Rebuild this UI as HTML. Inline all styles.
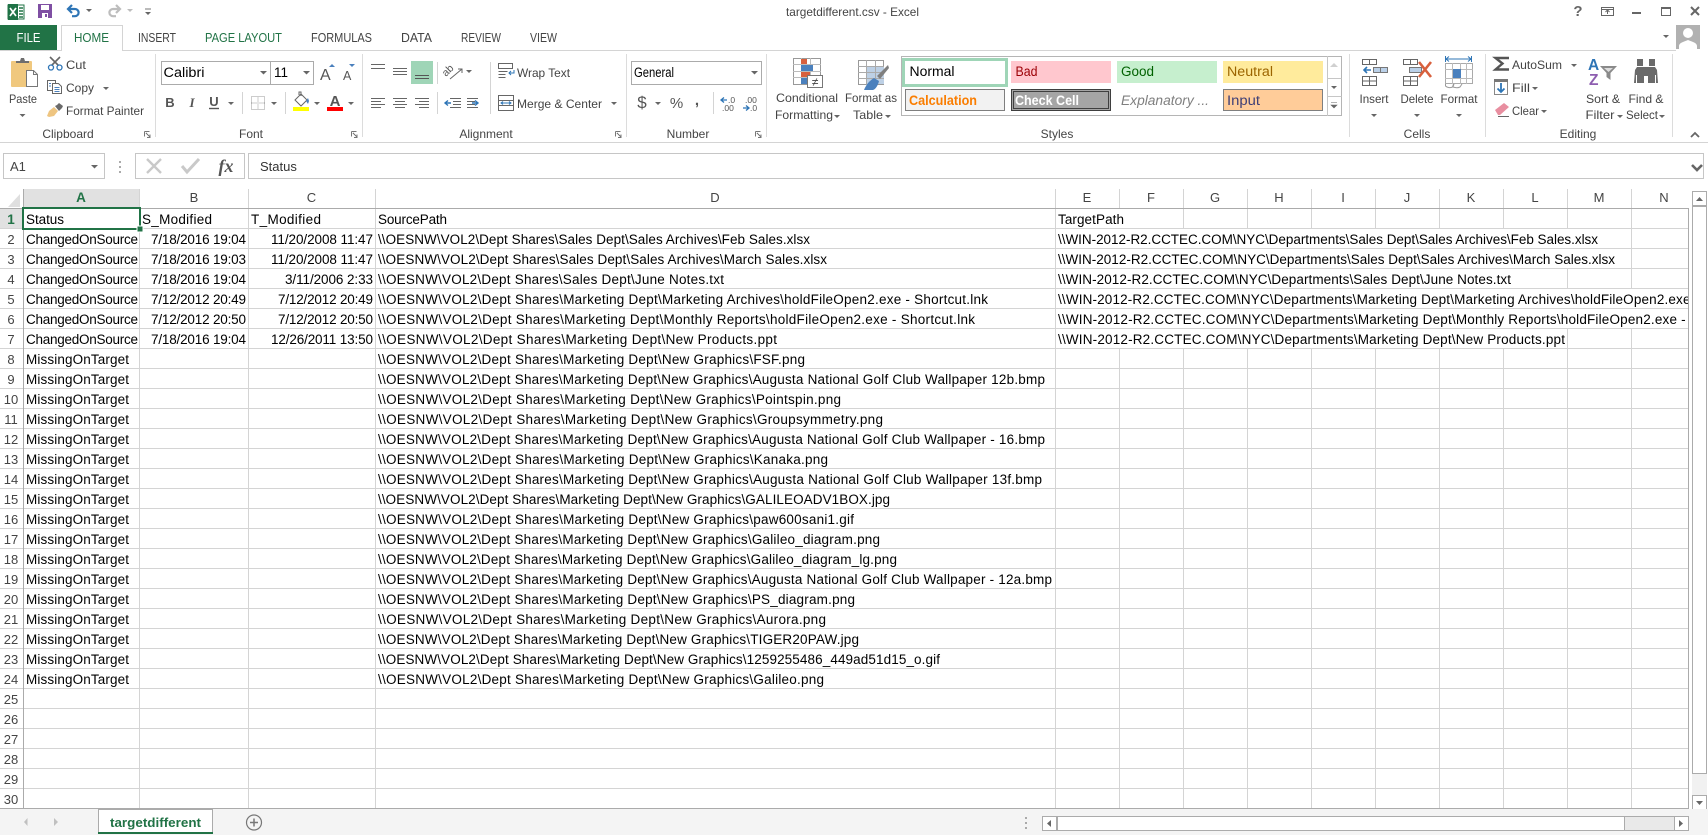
<!DOCTYPE html>
<html><head><meta charset="utf-8"><title>targetdifferent.csv - Excel</title>
<style>
html,body{margin:0;padding:0;background:#fff;width:1708px;height:835px;overflow:hidden}
svg{display:block}
text{font-family:"Liberation Sans",sans-serif;white-space:pre}
.r{font-size:12px;fill:#444}
.m{text-anchor:middle}
.c{font-size:13.5px;fill:#000}
.e{text-anchor:end}
.h{font-size:13px;fill:#444;text-anchor:middle}
.n{font-size:13px;fill:#444;text-anchor:middle}
.t{font-size:12px;fill:#444}
.s{font-size:13.5px}
.k{fill:#666}
.l{shape-rendering:crispEdges}
</style></head><body>
<svg width="1708" height="835" viewBox="0 0 1708 835" xmlns="http://www.w3.org/2000/svg">
<defs>
<clipPath id="ca"><rect x="23" y="208" width="116" height="600"/></clipPath>
<clipPath id="ce"><rect x="1056" y="208" width="632" height="600"/></clipPath>
</defs>
<rect width="1708" height="835" fill="#fff"/>

<!-- title bar -->
<rect x="8" y="5" width="16" height="14" fill="#fff" stroke="#217346" stroke-width="1"/>
<path d="M19 8h4M19 11h4M19 14h4M19 17h4" stroke="#217346" stroke-width="1.4"/>
<rect x="8" y="4" width="10" height="16" fill="#1f7246"/>
<path d="M10 8l6 8M16 8l-6 8" stroke="#fff" stroke-width="1.7"/>
<rect x="38" y="4" width="14" height="14" fill="#7f4fa3"/>
<rect x="41" y="5" width="8" height="5" fill="#fff"/><rect x="42" y="13" width="6" height="5" fill="#fff"/><rect x="45" y="14" width="2" height="3" fill="#7f4fa3"/>
<path d="M72 5l-4 4 4 4M68 9h7a3.6 3.6 0 0 1 0 7.2h-3" fill="none" stroke="#2e75b6" stroke-width="2.2"/>
<path d="M86 9h6l-3 3z" class="k"/>
<path d="M116 5l4 4-4 4M120 9h-7a3.6 3.6 0 0 0 0 7.2h3" fill="none" stroke="#bdbdbd" stroke-width="2.2"/>
<path d="M127 9h6l-3 3z" fill="#bdbdbd"/>
<path d="M145 9h6" stroke="#777" stroke-width="1"/><path d="M145 12h6l-3 3z" class="k"/>
<text x="852.5" y="16" class="r m" textLength="133" lengthAdjust="spacingAndGlyphs">targetdifferent.csv - Excel</text>
<text x="1578" y="16" font-size="15" font-weight="bold" fill="#666" text-anchor="middle">?</text>
<rect x="1601.5" y="7.5" width="12" height="8" fill="none" stroke="#666"/><path d="M1601 9.5h13" stroke="#666"/><path d="M1607.5 14v-3.5M1605.5 12l2-2 2 2" fill="none" stroke="#666"/>
<rect x="1632" y="12" width="9" height="2" fill="#666"/>
<rect x="1661.5" y="7.5" width="9" height="8" fill="none" stroke="#666"/><path d="M1661 8h10" stroke="#666" stroke-width="2"/>
<path d="M1691 7l8 8M1699 7l-8 8" stroke="#666" stroke-width="2"/>
<path d="M1663 35h6l-3 3z" class="k"/>
<rect x="1676" y="25" width="24" height="24" fill="#b1b1b1"/>
<circle cx="1688" cy="33" r="5" fill="#fff"/><path d="M1679 49v-3c0-3 4-4 9-6 5 2 9 3 9 6v3z" fill="#fff"/>

<!-- tabs -->
<rect x="0" y="25" width="57" height="25" fill="#217346"/>
<text x="28.5" y="42" font-size="12.5" fill="#fff" text-anchor="middle" textLength="24" lengthAdjust="spacingAndGlyphs">FILE</text>
<path d="M0 50.5H61.5V25.5H122.5V50.5H1676" fill="none" stroke="#d4d4d4" class="l"/>
<rect x="62" y="26" width="60" height="25" fill="#fff"/>
<text x="74" y="42" font-size="12.5" fill="#217346" textLength="35" lengthAdjust="spacingAndGlyphs">HOME</text>
<text x="138" y="42" font-size="12.5" fill="#444" textLength="38" lengthAdjust="spacingAndGlyphs">INSERT</text>
<text x="205" y="42" font-size="12.5" fill="#217346" textLength="77" lengthAdjust="spacingAndGlyphs">PAGE LAYOUT</text>
<text x="311" y="42" font-size="12.5" fill="#444" textLength="61" lengthAdjust="spacingAndGlyphs">FORMULAS</text>
<text x="401" y="42" font-size="12.5" fill="#444" textLength="31" lengthAdjust="spacingAndGlyphs">DATA</text>
<text x="461" y="42" font-size="12.5" fill="#444" textLength="40" lengthAdjust="spacingAndGlyphs">REVIEW</text>
<text x="530" y="42" font-size="12.5" fill="#444" textLength="27" lengthAdjust="spacingAndGlyphs">VIEW</text>

<!-- group separators -->
<path d="M155.5 54v83M362.5 54v83M626.5 54v83M766.5 54v83M1349.5 54v83M1485.5 54v83M1672.5 54v83" stroke="#dcdcdc" class="l"/>
<path d="M0 142.5H1708" stroke="#d4d4d4" class="l"/>

<!-- clipboard -->
<rect x="11" y="61" width="21" height="26" rx="1" fill="#f0c87e"/>
<path d="M16 63v-2h4l1-3h3l1 3h4v2z" fill="#6e6e6e"/>
<path d="M26.5 70.5h7l4 4v12h-11z" fill="#fff" stroke="#777"/><path d="M33.5 70.5v4h4" fill="none" stroke="#777"/>
<text x="23" y="103" class="r m" textLength="28" lengthAdjust="spacingAndGlyphs">Paste</text>
<path d="M19.500 114h6l-3 3z" class="k"/>
<path d="M50 57l8.500 8.500M60 57l-8.500 8.500" stroke="#666" stroke-width="1.6"/>
<circle cx="51" cy="67.500" r="2.500" fill="none" stroke="#2e75b6" stroke-width="1.300"/><circle cx="59.500" cy="67.500" r="2.500" fill="none" stroke="#2e75b6" stroke-width="1.300"/>
<text x="66" y="69" class="r" textLength="20" lengthAdjust="spacingAndGlyphs">Cut</text>
<rect x="47.500" y="80.500" width="8" height="10" fill="#fff" stroke="#666"/>
<path d="M52.500 83.500h6l3 3v7h-9z" fill="#fff" stroke="#666"/><path d="M54.500 87.500h5M54.500 89.500h5M54.500 91.500h5M49 83.500h2M49 86h2" stroke="#4a80bd"/>
<text x="66" y="92" class="r" textLength="28" lengthAdjust="spacingAndGlyphs">Copy</text>
<path d="M103 87h6l-3 3z" class="k"/>
<path d="M47 116l2-5 5-4 4 4-4 5-5 1z" fill="#eec581"/><path d="M55 106l2-1 2-2 4 3-1 2-2 2-1 1z" fill="#6a6a6a"/>
<text x="66" y="115" class="r" textLength="78" lengthAdjust="spacingAndGlyphs">Format Painter</text>
<text x="68" y="138" class="t m" fill="#555">Clipboard</text>
<path d="M144.500 131.500h5M144.500 131.500v5M146 133l4 4M150 134.500v3h-3" fill="none" stroke="#777" class="l"/>

<!-- font -->
<rect x="161.500" y="61.500" width="109" height="23" fill="#fff" stroke="#ababab"/><rect x="270.500" y="61.500" width="43" height="23" fill="#fff" stroke="#ababab"/>
<text x="163.500" y="77" class="s" fill="#000" textLength="41" lengthAdjust="spacingAndGlyphs">Calibri</text>
<path d="M260 71h7l-3.500 3.500z" class="k"/>
<text x="274" y="77" class="s" fill="#000">11</text>
<path d="M303 71h7l-3.500 3.500z" class="k"/>
<text x="320" y="80" font-size="16" fill="#555">A</text><path d="M329 67h6l-3-3z" fill="#4a80bd"/>
<text x="343" y="80" font-size="12.500" fill="#555">A</text><path d="M349 64h6l-3 3z" fill="#4a80bd"/>
<text x="170" y="107" font-size="13" font-weight="bold" fill="#555" text-anchor="middle">B</text>
<text x="192" y="107" font-size="13" font-style="italic" style="font-family:'Liberation Serif',serif" fill="#555" font-weight="bold" text-anchor="middle">I</text>
<text x="214" y="106" font-size="13" font-weight="bold" fill="#555" text-anchor="middle">U</text><path d="M209 108.500h10" stroke="#555" stroke-width="1.400"/>
<path d="M228 102h6l-3 3z" class="k"/>
<path d="M242.500 92v22M285.500 92v22" stroke="#d4d4d4" class="l"/>
<path d="M251.500 96.500h13v13h-13zM258 96.500v13M251.500 103h13" fill="none" stroke="#999" stroke-dasharray="1 1" class="l"/>
<path d="M271 102h6l-3 3z" class="k"/>
<path d="M295 100l6-6 6 6-6 6z" fill="#fff" stroke="#666"/><path d="M308 98l1 3-1 3-2-3z" fill="#4a80bd"/><path d="M299 95v-3h2v4" fill="none" stroke="#666"/>
<rect x="293" y="107" width="16" height="4" fill="#ff0"/>
<path d="M314 102h6l-3 3z" class="k"/>
<text x="335" y="106" font-size="15" font-weight="bold" fill="#555" text-anchor="middle">A</text>
<rect x="327" y="107" width="16" height="4" fill="#f00"/>
<path d="M348 102h6l-3 3z" class="k"/>
<text x="251" y="138" class="t m" fill="#555">Font</text>
<path d="M351.500 131.500h5M351.500 131.500v5M353 133l4 4M357 134.500v3h-3" fill="none" stroke="#777" class="l"/>

<!-- alignment -->
<path d="M371 64.500h14M371 68.500h14M393 68.500h14M393 71.500h14M393 74.500h14" stroke="#666" class="l"/>
<rect x="411" y="61" width="22" height="23" fill="#9fd5b7"/>
<path d="M415 75.500h14M415 78.500h14" stroke="#555" class="l"/>
<path d="M437.500 62v22M437.500 92v22M490.500 62v52" stroke="#d4d4d4" class="l"/>
<text x="0" y="0" font-size="10.500" fill="#555" transform="translate(446 77) rotate(-45)">ab</text>
<path d="M450 79l12-10M462 73v-4h-4" fill="none" stroke="#666"/>
<path d="M466 70h6l-3 3z" class="k"/>
<path d="M371 98.500h14M371 101.500h10M371 104.500h14M371 107.500h10M393 98.500h14M395 101.500h10M393 104.500h14M395 107.500h10M415 98.500h14M419 101.500h10M415 104.500h14M419 107.500h10" stroke="#666" class="l"/>
<path d="M450 98.500h11M453 101.500h8M453 104.500h8M450 107.500h11M467 98.500h11M467 101.500h8M467 104.500h8M467 107.500h11" stroke="#666" class="l"/>
<path d="M451 103h-6M448 100.500l-3 2.500 3 2.500M472 103h6M475 100.500l3 2.500-3 2.500" fill="none" stroke="#2e75b6" stroke-width="1.400"/>
<path d="M498.500 63.500h14v5h-14zM498.500 71.500h9M498.500 74.500h7M498.500 77.500h7" fill="none" stroke="#666"/><path d="M514 70v3h-5M511 71l-2 2 2 2" fill="none" stroke="#2e75b6"/>
<text x="517" y="77" class="r" textLength="53" lengthAdjust="spacingAndGlyphs">Wrap Text</text>
<rect x="498.500" y="95.500" width="15" height="15" fill="#fff" stroke="#666"/><path d="M498.500 100.500h15M498.500 105.500h15" stroke="#666"/><path d="M501 103h10M503 101.500l-2 1.500 2 1.500M509 101.500l2 1.500-2 1.500" fill="none" stroke="#2e75b6"/>
<text x="517" y="108" class="r" textLength="85" lengthAdjust="spacingAndGlyphs">Merge &amp; Center</text>
<path d="M611 102h6l-3 3z" class="k"/>
<text x="486" y="138" class="t m" fill="#555">Alignment</text>
<path d="M615.500 131.500h5M615.500 131.500v5M617 133l4 4M621 134.500v3h-3" fill="none" stroke="#777" class="l"/>

<!-- number -->
<rect x="631.500" y="61.500" width="130" height="23" fill="#fff" stroke="#ababab"/>
<text x="634" y="77" class="s" fill="#000" textLength="40" lengthAdjust="spacingAndGlyphs">General</text>
<path d="M751 71h7l-3.500 3.500z" class="k"/>
<text x="642" y="108" font-size="17" fill="#555" text-anchor="middle">$</text>
<path d="M655 102h6l-3 3z" class="k"/>
<text x="676.500" y="108" font-size="15" fill="#555" text-anchor="middle">%</text>
<text x="697" y="105" font-size="15" font-weight="bold" fill="#555" text-anchor="middle">,</text>
<path d="M713.500 92v22" stroke="#d4d4d4" class="l"/>
<path d="M727 100h-6M724 97.500l-3 2.500 3 2.500" fill="none" stroke="#2e75b6" stroke-width="1.300"/>
<text x="728" y="103" font-size="8.500" fill="#555">.0</text><text x="722" y="111" font-size="8.500" fill="#555">.00</text>
<text x="745" y="103" font-size="8.500" fill="#555">.00</text><text x="750" y="111" font-size="8.500" fill="#555">.0</text>
<path d="M743 108h6M746 105.500l3 2.500-3 2.500" fill="none" stroke="#2e75b6" stroke-width="1.300"/>
<text x="688" y="138" class="t m" fill="#555">Number</text>
<path d="M755.500 131.500h5M755.500 131.500v5M757 133l4 4M761 134.500v3h-3" fill="none" stroke="#777" class="l"/>

<!-- conditional / table -->
<rect x="793.500" y="58.500" width="27" height="26" fill="#fff" stroke="#999"/>
<path d="M801.500 58v26M810.500 58v26M793 64.500h28M793 71.500h28M793 77.500h28" stroke="#bbb" class="l"/>
<rect x="801" y="59" width="6" height="5" fill="#d8603d"/><rect x="801" y="65" width="12" height="6" fill="#4a80bd"/><rect x="801" y="72" width="9" height="5" fill="#d8603d"/><rect x="801" y="78" width="6" height="6" fill="#4a80bd"/>
<rect x="807.500" y="75.500" width="15" height="12" fill="#fff" stroke="#777"/>
<text x="815" y="86" font-size="12" fill="#444" text-anchor="middle">≠</text>
<text x="807" y="102" class="r m" textLength="62" lengthAdjust="spacingAndGlyphs">Conditional</text>
<text x="804" y="119" class="r m" textLength="58" lengthAdjust="spacingAndGlyphs">Formatting</text>
<path d="M834 115h6l-3 3z" class="k"/>
<rect x="858.500" y="60.500" width="25" height="24" fill="#fff" stroke="#999"/>
<rect x="866" y="66" width="18" height="18" fill="#bdd0e5"/>
<path d="M866.500 60v25M875.500 60v25M858 66.500h26M858 72.500h26M858 78.500h26" stroke="#aaa" class="l"/>
<path d="M888 65l1 3-9 11-3-3z" fill="#7f7f7f"/><path d="M864 90c2-5 5-9 10-12l5 3c-1 4-3 8-6 9z" fill="#4a80bd"/>
<text x="871" y="102" class="r m" textLength="52" lengthAdjust="spacingAndGlyphs">Format as</text>
<text x="868" y="119" class="r m" textLength="30" lengthAdjust="spacingAndGlyphs">Table</text>
<path d="M885 115h6l-3 3z" class="k"/>

<!-- styles gallery -->
<rect x="901.500" y="56.500" width="440" height="59" fill="#fff" stroke="#b5b5b5"/>
<path d="M1327.500 56v60M1327.500 78.500h14M1327.500 96.500h14" stroke="#c6c6c6" class="l"/>
<path d="M1330 67l4-4 4 4z" fill="#d0d0d0"/><path d="M1331 86h6l-3 3z" class="k"/><path d="M1331 102.500h6M1331 105h6l-3 3z" class="k" stroke="#666" stroke-width=".6"/>
<rect x="903.500" y="59.500" width="103" height="26" fill="#fff" stroke="#9fd5b7" stroke-width="3"/>
<text x="909.500" y="76" font-size="13.500" fill="#000" textLength="45" lengthAdjust="spacingAndGlyphs">Normal</text>
<rect x="1011" y="61" width="100" height="22" fill="#ffc7ce"/>
<text x="1015.500" y="76" font-size="13.500" fill="#9c0006" textLength="22" lengthAdjust="spacingAndGlyphs">Bad</text>
<rect x="1117" y="61" width="100" height="22" fill="#c6efce"/>
<text x="1121" y="76" font-size="13.500" fill="#006100" textLength="33" lengthAdjust="spacingAndGlyphs">Good</text>
<rect x="1223" y="61" width="100" height="22" fill="#ffeb9c"/>
<text x="1227" y="76" font-size="13.500" fill="#9c6500" textLength="46" lengthAdjust="spacingAndGlyphs">Neutral</text>
<rect x="905.500" y="89.500" width="99" height="21" fill="#f2f2f2" stroke="#7f7f7f"/>
<text x="909" y="105" font-size="13.500" font-weight="bold" fill="#fa7d00" textLength="68" lengthAdjust="spacingAndGlyphs">Calculation</text>
<rect x="1011.500" y="89.500" width="99" height="21" fill="#a5a5a5" stroke="#3f3f3f"/>
<rect x="1013.500" y="91.500" width="95" height="17" fill="none" stroke="#3f3f3f"/>
<text x="1015" y="105" font-size="13.500" font-weight="bold" fill="#fff" textLength="64" lengthAdjust="spacingAndGlyphs">Check Cell</text>
<text x="1121" y="105" font-size="13.500" font-style="italic" fill="#7f7f7f" textLength="88" lengthAdjust="spacingAndGlyphs">Explanatory ...</text>
<rect x="1223.500" y="89.500" width="99" height="21" fill="#fc9" stroke="#7f7f7f"/>
<text x="1227" y="105" font-size="13.500" fill="#3f3f76" textLength="33" lengthAdjust="spacingAndGlyphs">Input</text>
<text x="1057" y="138" class="t m" fill="#555">Styles</text>

<!-- cells -->
<path d="M1362.500 59.500h14v5h-14zM1369.500 59v6M1362.500 76.500h14v9h-14zM1369.500 76v10M1362 81h15" fill="none" stroke="#666"/>
<rect x="1373.500" y="67.500" width="14" height="5" fill="#bad0e8" stroke="#777"/><path d="M1380.500 67v6" stroke="#777"/>
<path d="M1371 70h-7M1367 67l-3 3 3 3" fill="none" stroke="#2e75b6" stroke-width="1.600"/>
<text x="1374" y="103" class="r m" textLength="29" lengthAdjust="spacingAndGlyphs">Insert</text><path d="M1371 114h6l-3 3z" class="k"/>
<path d="M1403.500 59.500h14v5h-14zM1410.500 59v6M1403.500 76.500h14v9h-14zM1410.500 76v10M1403 81h15" fill="none" stroke="#666"/>
<rect x="1409.500" y="67.500" width="12" height="5" fill="#bad0e8" stroke="#777"/>
<path d="M1419 62l12 15M1431 62l-12 15" stroke="#d8603d" stroke-width="2.600"/>
<text x="1417" y="103" class="r m" textLength="33" lengthAdjust="spacingAndGlyphs">Delete</text><path d="M1414 114h6l-3 3z" class="k"/>
<path d="M1446 59h25M1449 56.500l-3 2.500 3 2.500M1468 56.500l3 2.500-3 2.500M1445.500 56v6M1471.500 56v6" fill="none" stroke="#2e75b6"/>
<rect x="1445.500" y="63.500" width="27" height="20" fill="#fff" stroke="#aaa"/>
<path d="M1452.500 63v21M1460.500 63v21M1466.500 63v21M1445 69.500h28M1445 78.500h28" stroke="#bbb" class="l"/>
<rect x="1453" y="69" width="8" height="9" fill="#4a80bd"/>
<path d="M1445.500 84v2c2 2 5 2 7 1l1-3M1454 84l-1 3c3 1 5 1 7 0l2-3" fill="none" stroke="#999"/>
<text x="1459" y="103" class="r m" textLength="37" lengthAdjust="spacingAndGlyphs">Format</text><path d="M1456 114h6l-3 3z" class="k"/>
<text x="1417" y="138" class="t m" fill="#555">Cells</text>

<!-- editing -->
<path d="M1509 58H1495.500L1502.500 63.500L1495.500 69.500H1509" fill="none" stroke="#555" stroke-width="2.400"/>
<text x="1512" y="69" class="r" textLength="50" lengthAdjust="spacingAndGlyphs">AutoSum</text>
<path d="M1571 64h6l-3 3z" class="k"/>
<rect x="1494.500" y="79.500" width="13" height="15" fill="#fff" stroke="#888"/><rect x="1494" y="79" width="14" height="3" fill="#777"/>
<path d="M1501 83v9M1497.500 88.500l3.500 3.500 3.500-3.500" fill="none" stroke="#2e75b6" stroke-width="1.800"/>
<text x="1512" y="92" class="r" textLength="18" lengthAdjust="spacingAndGlyphs">Fill</text>
<path d="M1532 87h6l-3 3z" class="k"/>
<path d="M1495 110l9-7 5 4-9 8h-2z" fill="#e88ea0"/><path d="M1498 116.500h11" stroke="#666" class="l"/>
<text x="1512" y="115" class="r" textLength="27" lengthAdjust="spacingAndGlyphs">Clear</text>
<path d="M1541 110h6l-3 3z" class="k"/>
<text x="1588" y="70" font-size="15.500" font-weight="bold" fill="#2e75b6">A</text>
<text x="1589" y="85" font-size="15.500" font-weight="bold" fill="#8e5eb0">Z</text>
<path d="M1600 66h17l-6.500 7v7l-4-3v-4z" fill="#8a8a8a"/><path d="M1604 68h9l-4.500 4z" fill="#ddd"/>
<text x="1603" y="103" class="r m" textLength="34" lengthAdjust="spacingAndGlyphs">Sort &amp;</text>
<text x="1600" y="119" class="r m" textLength="29" lengthAdjust="spacingAndGlyphs">Filter</text>
<path d="M1617 115h6l-3 3z" class="k"/>
<rect x="1637" y="59" width="6" height="7" fill="#6a6a6a"/><rect x="1649" y="59" width="6" height="7" fill="#6a6a6a"/>
<path d="M1634 83l1-13 2-3h7v16zM1658 83l-1-13-2-3h-7v16z" fill="#6a6a6a"/>
<rect x="1644" y="67" width="4" height="9" fill="#6a6a6a"/>
<path d="M1636.500 75v8M1655.500 75v8" stroke="#fff" class="l"/>
<text x="1646" y="103" class="r m" textLength="35" lengthAdjust="spacingAndGlyphs">Find &amp;</text>
<text x="1642" y="119" class="r m" textLength="32" lengthAdjust="spacingAndGlyphs">Select</text>
<path d="M1659 115h6l-3 3z" class="k"/>
<text x="1578" y="138" class="t m" fill="#555">Editing</text>
<path d="M1691 137l4-4 4 4" fill="none" stroke="#666" stroke-width="1.800"/>

<!-- formula bar -->
<rect x="3.500" y="153.500" width="101" height="25" fill="#fff" stroke="#c6c6c6"/>
<text x="10" y="171" font-size="13" fill="#444">A1</text>
<path d="M91 165h7l-3.500 3.500z" class="k"/>
<path d="M119 161h2v2h-2zM119 166h2v2h-2zM119 171h2v2h-2z" fill="#aaa"/>
<rect x="135.500" y="153.500" width="109" height="25" fill="#fff" stroke="#c6c6c6"/>
<path d="M147 159l14 14M161 159l-14 14" stroke="#c9c9c9" stroke-width="2.400"/>
<path d="M182 166l5 6 12-13" fill="none" stroke="#c9c9c9" stroke-width="3"/>
<text x="226" y="172" font-size="18" font-style="italic" style="font-family:'Liberation Serif',serif" fill="#555" font-weight="bold" text-anchor="middle">fx</text>
<rect x="248.500" y="153.500" width="1455" height="25" fill="#fff" stroke="#c6c6c6"/>
<text x="260" y="171" font-size="13" fill="#333">Status</text>
<path d="M1692 165l5 5 5-5" fill="none" stroke="#666" stroke-width="2.600"/>

<!-- grid headers -->
<rect x="23" y="189" width="116" height="19" fill="#e1e1e1"/>
<rect x="0" y="209" width="23" height="19" fill="#e1e1e1"/>
<path d="M20 194v13H8z" fill="#dfdfdf"/>
<!-- grid lines -->
<path d="M23 228.500h1665M23 248.500h1665M23 268.500h1665M23 288.500h1665M23 308.500h1665M23 328.500h1665M23 348.500h1665M23 368.500h1665M23 388.500h1665M23 408.500h1665M23 428.500h1665M23 448.500h1665M23 468.500h1665M23 488.500h1665M23 508.500h1665M23 528.500h1665M23 548.500h1665M23 568.500h1665M23 588.500h1665M23 608.500h1665M23 628.500h1665M23 648.500h1665M23 668.500h1665M23 688.500h1665M23 708.500h1665M23 728.500h1665M23 748.500h1665M23 768.500h1665M23 788.500h1665M0 228.500h23M0 248.500h23M0 268.500h23M0 288.500h23M0 308.500h23M0 328.500h23M0 348.500h23M0 368.500h23M0 388.500h23M0 408.500h23M0 428.500h23M0 448.500h23M0 468.500h23M0 488.500h23M0 508.500h23M0 528.500h23M0 548.500h23M0 568.500h23M0 588.500h23M0 608.500h23M0 628.500h23M0 648.500h23M0 668.500h23M0 688.500h23M0 708.500h23M0 728.500h23M0 748.500h23M0 768.500h23M0 788.500h23" stroke="#d4d4d4" class="l"/>
<path d="M139.500 189V808M248.500 189V808M375.500 189V808M1055.500 189V808M1119.500 189V808M1183.500 189V808M1247.500 189V808M1311.500 189V808M1375.500 189V808M1439.500 189V808M1503.500 189V808M1567.500 189V808M1631.500 189V808" stroke="#d4d4d4" class="l"/>
<!-- overflowed text hides vertical gridlines -->
<rect x="1117" y="209" width="4" height="19" fill="#fff"/>
<rect x="1057" y="229" width="573" height="19" fill="#fff"/>
<rect x="1057" y="249" width="573" height="19" fill="#fff"/>
<rect x="1057" y="269" width="509" height="19" fill="#fff"/>
<rect x="1057" y="289" width="631" height="19" fill="#fff"/>
<rect x="1057" y="309" width="631" height="19" fill="#fff"/>
<rect x="1057" y="329" width="509" height="19" fill="#fff"/>
<path d="M0 208.500H1688M23.500 189V808M1688.500 208V808M0 808.500H1689" stroke="#ababab" class="l"/>

<text x="81" y="202" font-size="13.500" font-weight="bold" fill="#217346" text-anchor="middle">A</text>
<text x="194" y="202" class="h">B</text><text x="311.500" y="202" class="h">C</text><text x="715" y="202" class="h">D</text><text x="1087" y="202" class="h">E</text><text x="1151" y="202" class="h">F</text><text x="1215" y="202" class="h">G</text><text x="1279" y="202" class="h">H</text><text x="1343" y="202" class="h">I</text><text x="1407" y="202" class="h">J</text><text x="1471" y="202" class="h">K</text><text x="1535" y="202" class="h">L</text><text x="1599" y="202" class="h">M</text><text x="1664" y="202" class="h">N</text>

<text x="11" y="224" font-size="13.500" font-weight="bold" fill="#217346" text-anchor="middle">1</text>
<text x="11" y="244" class="n">2</text><text x="11" y="264" class="n">3</text><text x="11" y="284" class="n">4</text><text x="11" y="304" class="n">5</text><text x="11" y="324" class="n">6</text><text x="11" y="344" class="n">7</text><text x="11" y="364" class="n">8</text><text x="11" y="384" class="n">9</text><text x="11" y="404" class="n">10</text><text x="11" y="424" class="n">11</text><text x="11" y="444" class="n">12</text><text x="11" y="464" class="n">13</text><text x="11" y="484" class="n">14</text><text x="11" y="504" class="n">15</text><text x="11" y="524" class="n">16</text><text x="11" y="544" class="n">17</text><text x="11" y="564" class="n">18</text><text x="11" y="584" class="n">19</text><text x="11" y="604" class="n">20</text><text x="11" y="624" class="n">21</text><text x="11" y="644" class="n">22</text><text x="11" y="664" class="n">23</text><text x="11" y="684" class="n">24</text><text x="11" y="704" class="n">25</text><text x="11" y="724" class="n">26</text><text x="11" y="744" class="n">27</text><text x="11" y="764" class="n">28</text><text x="11" y="784" class="n">29</text><text x="11" y="804" class="n">30</text>

<!-- cells -->
<g>
<g clip-path="url(#ca)">
<text class="c" x="26" y="224" textLength="38">Status</text>
<text class="c" x="26" y="244" textLength="112">ChangedOnSource</text>
<text class="c" x="26" y="264" textLength="112">ChangedOnSource</text>
<text class="c" x="26" y="284" textLength="112">ChangedOnSource</text>
<text class="c" x="26" y="304" textLength="112">ChangedOnSource</text>
<text class="c" x="26" y="324" textLength="112">ChangedOnSource</text>
<text class="c" x="26" y="344" textLength="112">ChangedOnSource</text>
<text class="c" x="26" y="364" textLength="103">MissingOnTarget</text>
<text class="c" x="26" y="384" textLength="103">MissingOnTarget</text>
<text class="c" x="26" y="404" textLength="103">MissingOnTarget</text>
<text class="c" x="26" y="424" textLength="103">MissingOnTarget</text>
<text class="c" x="26" y="444" textLength="103">MissingOnTarget</text>
<text class="c" x="26" y="464" textLength="103">MissingOnTarget</text>
<text class="c" x="26" y="484" textLength="103">MissingOnTarget</text>
<text class="c" x="26" y="504" textLength="103">MissingOnTarget</text>
<text class="c" x="26" y="524" textLength="103">MissingOnTarget</text>
<text class="c" x="26" y="544" textLength="103">MissingOnTarget</text>
<text class="c" x="26" y="564" textLength="103">MissingOnTarget</text>
<text class="c" x="26" y="584" textLength="103">MissingOnTarget</text>
<text class="c" x="26" y="604" textLength="103">MissingOnTarget</text>
<text class="c" x="26" y="624" textLength="103">MissingOnTarget</text>
<text class="c" x="26" y="644" textLength="103">MissingOnTarget</text>
<text class="c" x="26" y="664" textLength="103">MissingOnTarget</text>
<text class="c" x="26" y="684" textLength="103">MissingOnTarget</text>
</g>
<text class="c" x="142" y="224" textLength="70">S_Modified</text>
<text class="c" x="251" y="224" textLength="70">T_Modified</text>
<text class="c" x="378" y="224" textLength="69">SourcePath</text>
<text class="c" x="151" y="244" textLength="95">7/18/2016 19:04</text><text class="c" x="271" y="244" textLength="102">11/20/2008 11:47</text>
<text class="c" x="151" y="264" textLength="95">7/18/2016 19:03</text><text class="c" x="271" y="264" textLength="102">11/20/2008 11:47</text>
<text class="c" x="151" y="284" textLength="95">7/18/2016 19:04</text><text class="c" x="285" y="284" textLength="88">3/11/2006 2:33</text>
<text class="c" x="151" y="304" textLength="95">7/12/2012 20:49</text><text class="c" x="278" y="304" textLength="95">7/12/2012 20:49</text>
<text class="c" x="151" y="324" textLength="95">7/12/2012 20:50</text><text class="c" x="278" y="324" textLength="95">7/12/2012 20:50</text>
<text class="c" x="151" y="344" textLength="95">7/18/2016 19:04</text><text class="c" x="271" y="344" textLength="102">12/26/2011 13:50</text>
<text class="c" x="378" y="244" textLength="432">\\OESNW\VOL2\Dept Shares\Sales Dept\Sales Archives\Feb Sales.xlsx</text>
<text class="c" x="378" y="264" textLength="449">\\OESNW\VOL2\Dept Shares\Sales Dept\Sales Archives\March Sales.xlsx</text>
<text class="c" x="378" y="284" textLength="346">\\OESNW\VOL2\Dept Shares\Sales Dept\June Notes.txt</text>
<text class="c" x="378" y="304" textLength="610">\\OESNW\VOL2\Dept Shares\Marketing Dept\Marketing Archives\holdFileOpen2.exe - Shortcut.lnk</text>
<text class="c" x="378" y="324" textLength="597">\\OESNW\VOL2\Dept Shares\Marketing Dept\Monthly Reports\holdFileOpen2.exe - Shortcut.lnk</text>
<text class="c" x="378" y="344" textLength="399">\\OESNW\VOL2\Dept Shares\Marketing Dept\New Products.ppt</text>
<text class="c" x="378" y="364" textLength="427">\\OESNW\VOL2\Dept Shares\Marketing Dept\New Graphics\FSF.png</text>
<text class="c" x="378" y="384" textLength="667">\\OESNW\VOL2\Dept Shares\Marketing Dept\New Graphics\Augusta National Golf Club Wallpaper 12b.bmp</text>
<text class="c" x="378" y="404" textLength="463">\\OESNW\VOL2\Dept Shares\Marketing Dept\New Graphics\Pointspin.png</text>
<text class="c" x="378" y="424" textLength="505">\\OESNW\VOL2\Dept Shares\Marketing Dept\New Graphics\Groupsymmetry.png</text>
<text class="c" x="378" y="444" textLength="667">\\OESNW\VOL2\Dept Shares\Marketing Dept\New Graphics\Augusta National Golf Club Wallpaper - 16.bmp</text>
<text class="c" x="378" y="464" textLength="450">\\OESNW\VOL2\Dept Shares\Marketing Dept\New Graphics\Kanaka.png</text>
<text class="c" x="378" y="484" textLength="664">\\OESNW\VOL2\Dept Shares\Marketing Dept\New Graphics\Augusta National Golf Club Wallpaper 13f.bmp</text>
<text class="c" x="378" y="504" textLength="512">\\OESNW\VOL2\Dept Shares\Marketing Dept\New Graphics\GALILEOADV1BOX.jpg</text>
<text class="c" x="378" y="524" textLength="476">\\OESNW\VOL2\Dept Shares\Marketing Dept\New Graphics\paw600sani1.gif</text>
<text class="c" x="378" y="544" textLength="502">\\OESNW\VOL2\Dept Shares\Marketing Dept\New Graphics\Galileo_diagram.png</text>
<text class="c" x="378" y="564" textLength="519">\\OESNW\VOL2\Dept Shares\Marketing Dept\New Graphics\Galileo_diagram_lg.png</text>
<text class="c" x="378" y="584" textLength="674">\\OESNW\VOL2\Dept Shares\Marketing Dept\New Graphics\Augusta National Golf Club Wallpaper - 12a.bmp</text>
<text class="c" x="378" y="604" textLength="477">\\OESNW\VOL2\Dept Shares\Marketing Dept\New Graphics\PS_diagram.png</text>
<text class="c" x="378" y="624" textLength="448">\\OESNW\VOL2\Dept Shares\Marketing Dept\New Graphics\Aurora.png</text>
<text class="c" x="378" y="644" textLength="481">\\OESNW\VOL2\Dept Shares\Marketing Dept\New Graphics\TIGER20PAW.jpg</text>
<text class="c" x="378" y="664" textLength="562">\\OESNW\VOL2\Dept Shares\Marketing Dept\New Graphics\1259255486_449ad51d15_o.gif</text>
<text class="c" x="378" y="684" textLength="446">\\OESNW\VOL2\Dept Shares\Marketing Dept\New Graphics\Galileo.png</text>
<g clip-path="url(#ce)">
<text class="c" x="1058" y="224" textLength="66">TargetPath</text>
<text class="c" x="1058" y="244" textLength="540">\\WIN-2012-R2.CCTEC.COM\NYC\Departments\Sales Dept\Sales Archives\Feb Sales.xlsx</text>
<text class="c" x="1058" y="264" textLength="557">\\WIN-2012-R2.CCTEC.COM\NYC\Departments\Sales Dept\Sales Archives\March Sales.xlsx</text>
<text class="c" x="1058" y="284" textLength="453">\\WIN-2012-R2.CCTEC.COM\NYC\Departments\Sales Dept\June Notes.txt</text>
<text class="c" x="1058" y="304" textLength="718">\\WIN-2012-R2.CCTEC.COM\NYC\Departments\Marketing Dept\Marketing Archives\holdFileOpen2.exe - Shortcut.lnk</text>
<text class="c" x="1058" y="324" textLength="705">\\WIN-2012-R2.CCTEC.COM\NYC\Departments\Marketing Dept\Monthly Reports\holdFileOpen2.exe - Shortcut.lnk</text>
<text class="c" x="1058" y="344" textLength="507">\\WIN-2012-R2.CCTEC.COM\NYC\Departments\Marketing Dept\New Products.ppt</text>
</g>
</g>

<!-- selection -->
<rect x="23" y="208" width="117" height="21" fill="none" stroke="#217346" stroke-width="2"/>
<rect x="137" y="226" width="6" height="6" fill="#217346" stroke="#fff"/>

<!-- v scrollbar -->
<rect x="1692" y="206" width="15" height="589" fill="#f1f1f1"/>
<rect x="1692.500" y="191.500" width="14" height="14" fill="#fff" stroke="#ababab"/>
<path d="M1696 201l3.500-4 3.500 4z" fill="#666"/>
<rect x="1692.500" y="206.500" width="14" height="567" fill="#fff" stroke="#ababab"/>
<rect x="1692.500" y="795.500" width="14" height="14" fill="#fff" stroke="#ababab"/>
<path d="M1696 801h7l-3.500 4z" fill="#666"/>

<!-- bottom bar -->
<rect x="0" y="809" width="1708" height="26" fill="#f4f4f4"/>
<path d="M27.500 818v8l-3.500-4z" fill="#c0c0c0"/><path d="M54 818v8l4-4z" fill="#c0c0c0"/>
<path d="M98.500 833V809.500H212.500V833" fill="#fff" stroke="#ababab"/>
<rect x="98" y="832" width="115" height="2" fill="#217346"/>
<text x="155.500" y="827" font-size="12.500" font-weight="bold" fill="#217346" text-anchor="middle" textLength="91" lengthAdjust="spacingAndGlyphs">targetdifferent</text>
<circle cx="254" cy="822.500" r="7.500" fill="none" stroke="#777" stroke-width="1.200"/><path d="M250 822.500h8M254 818.500v8" stroke="#777" stroke-width="1.500"/>
<path d="M1025 817h2v2h-2zM1025 822h2v2h-2zM1025 827h2v2h-2z" fill="#aaa"/>
<rect x="1042.500" y="816.500" width="645.500" height="14" fill="#e9e9e9" stroke="#ababab"/>
<rect x="1042.500" y="816.500" width="14" height="14" fill="#fff" stroke="#ababab"/>
<path d="M1051 820v7l-4-3.500z" fill="#666"/>
<rect x="1056.500" y="816.500" width="568" height="14" fill="#fff" stroke="#ababab" stroke-width="1"/>
<rect x="1056" y="816" width="2" height="15" fill="#ababab"/>
<rect x="1674.500" y="816.500" width="14" height="14" fill="#fff" stroke="#ababab"/>
<path d="M1679 820v7l4-3.500z" fill="#666"/>
</svg>
</body></html>
